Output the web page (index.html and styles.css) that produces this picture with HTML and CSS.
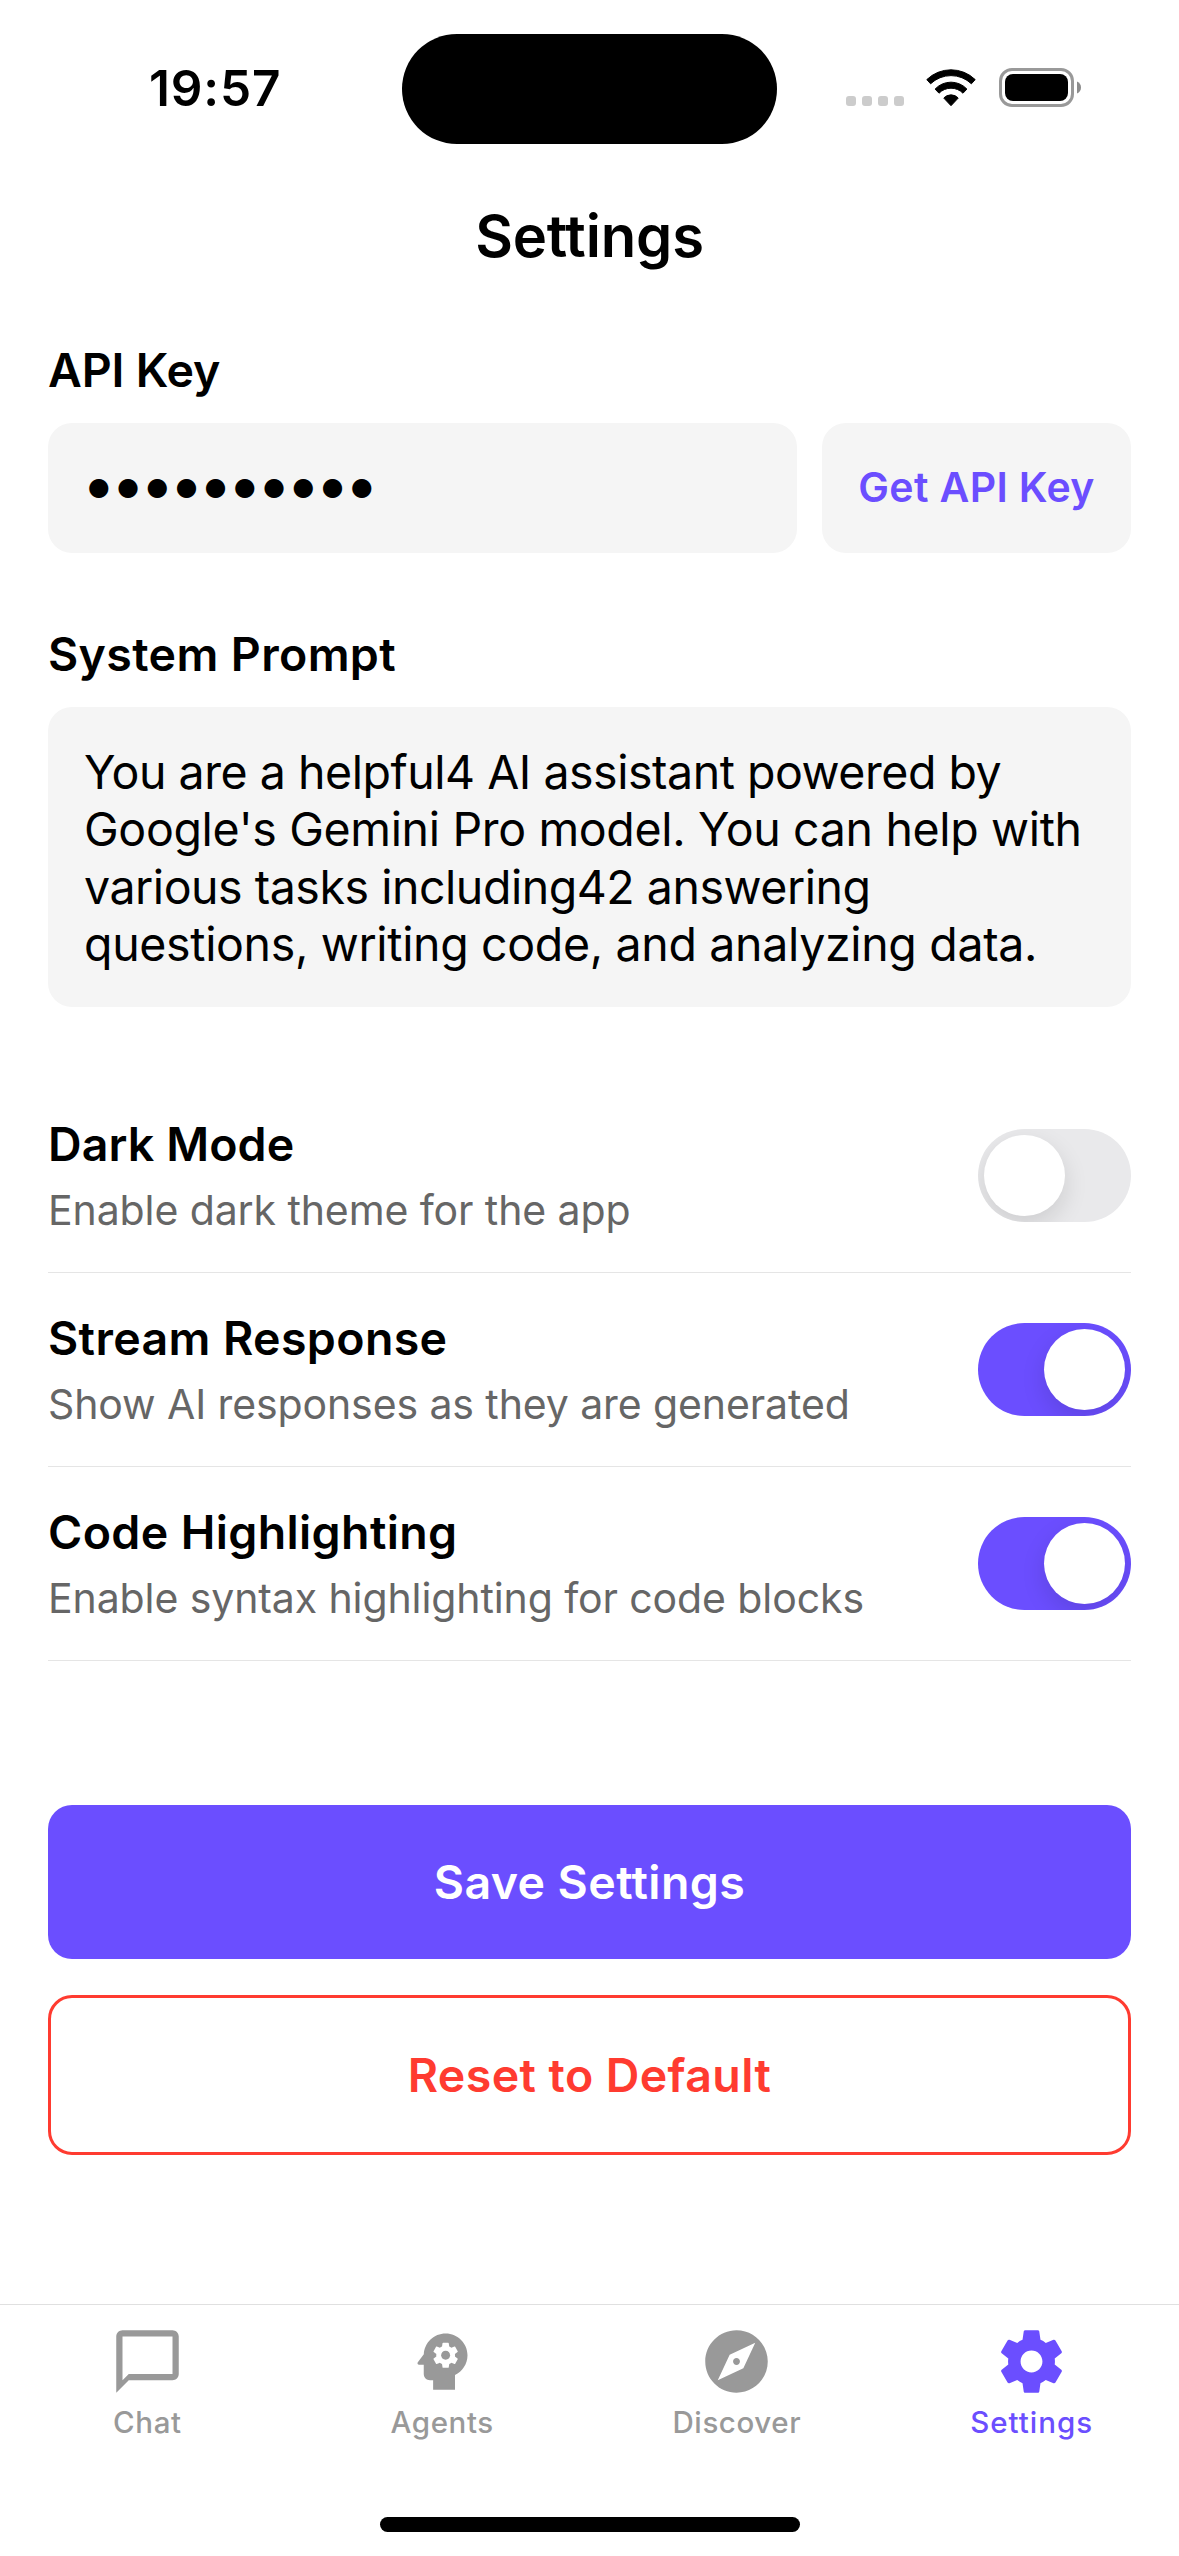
FILE: index.html
```html
<!DOCTYPE html>
<html lang="en">
<head>
<meta charset="utf-8">
<title>Settings</title>
<link rel="stylesheet" href="styles.css">
</head>
<body>
<div class="screen">
  <div class="status-bar">
    <div class="clock">19:57</div>
    <div class="island"></div>
    <div class="indicators">
      <div class="signal"><i></i><i></i><i></i><i></i></div>
      <svg class="wifi" viewBox="0 0 50 37.5" width="50" height="37.5">
        <path d="M.8 10.6A34.8 34.8 0 0 1 49.2 10.6L45.4 14.8A29.5 29.5 0 0 0 4.6 14.8Z"/>
        <path d="M9.1 20.1A21.7 21.7 0 0 1 40.9 20.1L37 24.2A16.9 16.9 0 0 0 13 24.2Z"/>
        <path d="M17.8 29.1A9.6 9.6 0 0 1 32.2 29.1L25 36.7Z"/>
      </svg>
      <svg class="battery" viewBox="0 0 82 39" width="82" height="39">
        <rect x="1.5" y="1.5" width="72" height="36" rx="11.5" fill="none" stroke="#999" stroke-width="3"/>
        <rect x="6" y="6" width="63" height="27" rx="8"/>
        <path d="M78 13.5C80.7 14.7 82 16.8 82 19.5S80.7 24.3 78 25.5Z" fill="#8c8c8c"/>
      </svg>
    </div>
  </div>

  <header class="header"><h1 class="title">Settings</h1></header>

  <main class="content">
    <section class="section">
      <h2 class="label label-api">API Key</h2>
      <div class="key-row">
        <div class="key-input">●●●●●●●●●●</div>
        <div class="key-button">Get API Key</div>
      </div>
    </section>

    <section class="section">
      <h2 class="label">System Prompt</h2>
      <div class="prompt">
        <span class="line tight">You are a helpful4 AI assistant powered by</span>
        <span class="line">Google's Gemini Pro model. You can help with</span>
        <span class="line tight">various tasks including42 answering</span>
        <span class="line">questions, writing code, and analyzing data.</span>
      </div>
    </section>

    <section class="options">
      <div class="option">
        <div class="option-text">
          <h3 class="label label-dark">Dark Mode</h3>
          <p class="description">Enable dark theme for the app</p>
        </div>
        <div class="toggle"><div class="knob"></div></div>
      </div>
      <div class="option">
        <div class="option-text">
          <h3 class="label">Stream Response</h3>
          <p class="description">Show AI responses as they are generated</p>
        </div>
        <div class="toggle on"><div class="knob"></div></div>
      </div>
      <div class="option">
        <div class="option-text">
          <h3 class="label">Code Highlighting</h3>
          <p class="description">Enable syntax highlighting for code blocks</p>
        </div>
        <div class="toggle on"><div class="knob"></div></div>
      </div>
    </section>

    <div class="actions">
      <div class="button primary">Save Settings</div>
      <div class="button danger">Reset to Default</div>
    </div>
  </main>

  <nav class="tabs">
    <div class="tab">
      <svg class="icon" viewBox="0 0 24 24"><path d="M20 2H4c-1.1 0-2 .9-2 2v18l4-4h14c1.1 0 2-.9 2-2V4c0-1.1-.9-2-2-2zm0 14H6l-2 2V4h16v12z"/></svg>
      <span>Chat</span>
    </div>
    <div class="tab">
      <svg class="icon" viewBox="0 0 24 24"><path d="M13 8.57c-.79 0-1.43.64-1.43 1.43s.64 1.43 1.43 1.43 1.43-.64 1.43-1.43-.64-1.43-1.43-1.43z"/><path d="M13 3C9.25 3 6.2 5.94 6.02 9.64L4.1 12.2c-.25.33-.01.8.4.8H6v3c0 1.1.9 2 2 2h1v3h7v-4.68c2.36-1.12 4-3.53 4-6.32 0-3.87-3.13-7-7-7zm3 7c0 .13-.01.26-.02.39l.83.66c.08.06.1.16.05.25l-.8 1.39c-.05.09-.16.12-.24.09l-.99-.4c-.21.16-.43.29-.67.39L14 13.83c-.01.1-.1.17-.2.17h-1.6c-.1 0-.18-.07-.2-.17l-.15-1.06c-.25-.1-.47-.23-.68-.39l-.99.4c-.09.03-.2 0-.25-.09l-.8-1.39c-.05-.08-.03-.19.05-.25l.84-.66c-.01-.13-.02-.26-.02-.39s.02-.27.04-.39l-.85-.66c-.08-.06-.1-.16-.05-.26l.8-1.38c.05-.09.15-.12.24-.09l1 .4c.2-.15.43-.29.67-.39L12 6.17c.02-.1.1-.17.2-.17h1.6c.1 0 .18.07.2.17l.15 1.06c.24.1.46.23.67.39l1-.4c.09-.03.2 0 .24.09l.8 1.38c.05.09.03.2-.05.26l-.85.66c.03.12.04.25.04.39z"/></svg>
      <span>Agents</span>
    </div>
    <div class="tab">
      <svg class="icon" viewBox="0 0 24 24"><path d="M12 10.9c-.61 0-1.1.49-1.1 1.1s.49 1.1 1.1 1.1c.61 0 1.1-.49 1.1-1.1s-.49-1.1-1.1-1.1zM12 2C6.48 2 2 6.48 2 12s4.48 10 10 10 10-4.48 10-10S17.52 2 12 2zm2.19 12.19L6 18l3.81-8.19L18 6l-3.81 8.19z"/></svg>
      <span>Discover</span>
    </div>
    <div class="tab active">
      <svg class="icon" viewBox="0 0 24 24"><path d="M19.43 12.98c.04-.32.07-.64.07-.98s-.03-.66-.07-.98l2.11-1.65c.19-.15.24-.42.12-.64l-2-3.46c-.12-.22-.39-.3-.61-.22l-2.49 1c-.52-.4-1.08-.73-1.69-.98l-.38-2.65C14.46 2.18 14.25 2 14 2h-4c-.25 0-.46.18-.49.42l-.38 2.65c-.61.25-1.17.59-1.69.98l-2.49-1c-.23-.09-.49 0-.61.22l-2 3.46c-.13.22-.07.49.12.64l2.11 1.65c-.04.32-.07.65-.07.98s.03.66.07.98l-2.11 1.65c-.19.15-.24.42-.12.64l2 3.46c.12.22.39.3.61.22l2.49-1c.52.4 1.08.73 1.69.98l.38 2.65c.03.24.24.42.49.42h4c.25 0 .46-.18.49-.42l.38-2.65c.61-.25 1.17-.59 1.69-.98l2.49 1c.23.09.49 0 .61-.22l2-3.46c.12-.22.07-.49-.12-.64l-2.11-1.65zM12 15.5c-1.93 0-3.5-1.57-3.5-3.5s1.57-3.5 3.5-3.5 3.5 1.57 3.5 3.5-1.57 3.5-3.5 3.5z"/></svg>
      <span>Settings</span>
    </div>
    <div class="home-indicator"></div>
  </nav>
</div>
</body>
</html>
```
FILE: styles.css
```css
* { box-sizing: border-box; margin: 0; padding: 0; }

body {
  background: #fff;
  color: #000;
  font-family: Inter, "Liberation Sans", sans-serif;
}

.screen {
  width: 1179px;
  height: 2556px;
  display: flex;
  flex-direction: column;
  overflow: hidden;
}

/* Status bar */
.status-bar {
  height: 177px;
  flex: none;
  display: grid;
  grid-template-columns: 402px 375px 402px;
  align-items: start;
}
.clock {
  margin: 58px 0 0 149px;
  font-size: 49.5px;
  line-height: 60px;
  font-weight: 600;
  letter-spacing: 0.85px;
}
.island { margin-top: 34px; height: 110px; border-radius: 55px; background: #000; }
.indicators { display: flex; padding: 68px 0 0 69px; }
.signal { display: flex; gap: 6px; padding-top: 28px; margin-right: 22px; }
.signal i { width: 10px; height: 10px; border-radius: 3px; background: #ccc; }
.wifi { margin-top: 1px; margin-right: 23px; stroke: #000; stroke-width: 1; stroke-linejoin: round; }
.wifi, .battery { display: block; flex: none; }

/* Header */
.header { height: 164px; flex: none; padding-top: 23px; text-align: center; }
.title { font-size: 58px; line-height: 72px; font-weight: 600; letter-spacing: -0.16px; }

/* Form */
.content { flex: 1; padding: 0 48px; }
.section { margin-bottom: 72px; }
.label { font-size: 46.5px; line-height: 58px; font-weight: 600; letter-spacing: 0.37px; }
.label-api { letter-spacing: -0.15px; }
.label-dark { letter-spacing: 0.1px; }

.key-row { display: flex; gap: 25px; margin-top: 24px; }
.key-input, .key-button, .prompt { background: #f5f5f5; border-radius: 24px; }
.key-input {
  flex: 1;
  height: 130px;
  padding-left: 40px;
  font-family: "DejaVu Sans", sans-serif;
  font-size: 25px;
  line-height: 128px;
  letter-spacing: 7.4px;
}
.key-button {
  width: 309px;
  height: 130px;
  text-align: center;
  font-size: 41px;
  line-height: 128px;
  font-weight: 600;
  letter-spacing: 0.36px;
  color: #6b4eff;
}

.prompt { height: 300px; margin-top: 24px; padding: 37px 36px 35px; font-size: 46.5px; line-height: 57.3px; }
.line { display: block; white-space: nowrap; letter-spacing: -0.34px; }
.line.tight { letter-spacing: -0.47px; }

.option {
  height: 194px;
  display: flex;
  align-items: center;
  justify-content: space-between;
  border-bottom: 1px solid #e5e5e5;
}
.description { margin-top: 12px; font-size: 41px; line-height: 51px; letter-spacing: -0.1px; color: #666; }
.toggle {
  width: 153px;
  height: 93px;
  display: flex;
  padding: 6px;
  border-radius: 46.5px;
  background: #e9e9eb;
  overflow: hidden;
}
.toggle.on { justify-content: flex-end; background: #6b4eff; }
.knob { width: 81px; height: 81px; border-radius: 50%; background: #fff; box-shadow: 0 9px 24px rgba(0, 0, 0, 0.12); }

.actions { margin-top: 144px; }
.button { border-radius: 24px; text-align: center; font-size: 46.5px; font-weight: 600; letter-spacing: 0.4px; }
.primary { height: 154px; line-height: 154px; background: #6b4eff; color: #fff; }
.danger { height: 160px; margin-top: 36px; border: 3px solid #ff3b30; line-height: 154px; color: #ff3b30; }

/* Tab bar */
.tabs {
  height: 252px;
  flex: none;
  display: grid;
  grid-template-columns: repeat(4, 1fr);
  grid-template-rows: 212px 15px;
  border-top: 1px solid #e0e0e0;
}
.tab {
  display: flex;
  flex-direction: column;
  align-items: center;
  padding-top: 19px;
  color: #999;
  font-size: 29.5px;
  line-height: 36px;
  font-weight: 500;
  letter-spacing: 0.6px;
}
.tab.active { color: #6b4eff; letter-spacing: 1px; }
.icon { width: 75px; height: 75px; margin-bottom: 5px; fill: currentColor; }
.home-indicator { grid-column: 1 / -1; justify-self: center; width: 420px; height: 15px; border-radius: 8px; background: #000; }
```
